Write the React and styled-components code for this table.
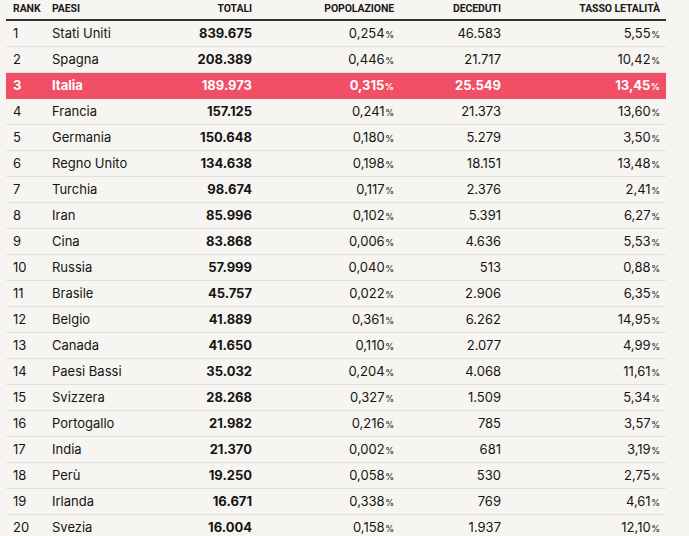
import React from "react";
import styled, { createGlobalStyle } from "styled-components";

const GlobalStyle = createGlobalStyle`
  html, body {
    margin: 0;
    padding: 0;
    background: #f7f5f1;
  }
  body {
    font-family: Inter, "Noto Sans", sans-serif;
    color: #141414;
  }
`;

const COLS = "40px 136px 76px 142px 107px 159px";

const Table = styled.div`
  width: 660px;
  margin-left: 6px;
`;

const HeaderRow = styled.div`
  display: grid;
  grid-template-columns: ${COLS};
  height: 19px;
  border-bottom: 2px solid #333;
  font-family: Roboto, "Liberation Sans", sans-serif;
  font-weight: 700;
  font-size: 10.5px;
  letter-spacing: -0.1px;
  text-transform: uppercase;
  color: #1a1a1a;
`;

const HeadCell = styled.div`
  padding: 2px 6px 0 ${(p) => (p.$first ? "7px" : "6px")};
  text-align: ${(p) => (p.$right ? "right" : "left")};
  white-space: nowrap;
`;

const Row = styled.div`
  display: grid;
  grid-template-columns: ${COLS};
  align-items: center;
  height: 25px;
  border-bottom: 1px solid ${(p) => (p.$active ? "#f04f66" : "#e4e1dc")};
  background: ${(p) => (p.$active ? "#f04f66" : "transparent")};
  color: ${(p) => (p.$active ? "#fff" : "#141414")};
  font-size: 13px;
  font-weight: ${(p) => (p.$active ? 700 : 400)};
`;

const Cell = styled.div`
  padding: 0 6px 1px ${(p) => (p.$first ? "7px" : "6px")};
  text-align: ${(p) => (p.$right ? "right" : "left")};
  font-weight: ${(p) => (p.$bold ? 700 : "inherit")};
  white-space: nowrap;
`;

const Pct = styled.span`
  font-size: 9px;
  margin-left: 0.5px;
`;

const rows = [
  ["Stati Uniti", "839.675", "0,254", "46.583", "5,55"],
  ["Spagna", "208.389", "0,446", "21.717", "10,42"],
  ["Italia", "189.973", "0,315", "25.549", "13,45"],
  ["Francia", "157.125", "0,241", "21.373", "13,60"],
  ["Germania", "150.648", "0,180", "5.279", "3,50"],
  ["Regno Unito", "134.638", "0,198", "18.151", "13,48"],
  ["Turchia", "98.674", "0,117", "2.376", "2,41"],
  ["Iran", "85.996", "0,102", "5.391", "6,27"],
  ["Cina", "83.868", "0,006", "4.636", "5,53"],
  ["Russia", "57.999", "0,040", "513", "0,88"],
  ["Brasile", "45.757", "0,022", "2.906", "6,35"],
  ["Belgio", "41.889", "0,361", "6.262", "14,95"],
  ["Canada", "41.650", "0,110", "2.077", "4,99"],
  ["Paesi Bassi", "35.032", "0,204", "4.068", "11,61"],
  ["Svizzera", "28.268", "0,327", "1.509", "5,34"],
  ["Portogallo", "21.982", "0,216", "785", "3,57"],
  ["India", "21.370", "0,002", "681", "3,19"],
  ["Perù", "19.250", "0,058", "530", "2,75"],
  ["Irlanda", "16.671", "0,338", "769", "4,61"],
  ["Svezia", "16.004", "0,158", "1.937", "12,10"],
];

export default function App() {
  return (
    <>
      <GlobalStyle />
      <Table>
        <HeaderRow>
          <HeadCell $first>Rank</HeadCell>
          <HeadCell>Paesi</HeadCell>
          <HeadCell $right>Totali</HeadCell>
          <HeadCell $right>Popolazione</HeadCell>
          <HeadCell $right>Deceduti</HeadCell>
          <HeadCell $right>Tasso letalità</HeadCell>
        </HeaderRow>
        {rows.map((r, i) => (
          <Row key={r[0]} $active={r[0] === "Italia"}>
            <Cell $first>{i + 1}</Cell>
            <Cell>{r[0]}</Cell>
            <Cell $right $bold>{r[1]}</Cell>
            <Cell $right>
              {r[2]}
              <Pct>%</Pct>
            </Cell>
            <Cell $right>{r[3]}</Cell>
            <Cell $right>
              {r[4]}
              <Pct>%</Pct>
            </Cell>
          </Row>
        ))}
      </Table>
    </>
  );
}
